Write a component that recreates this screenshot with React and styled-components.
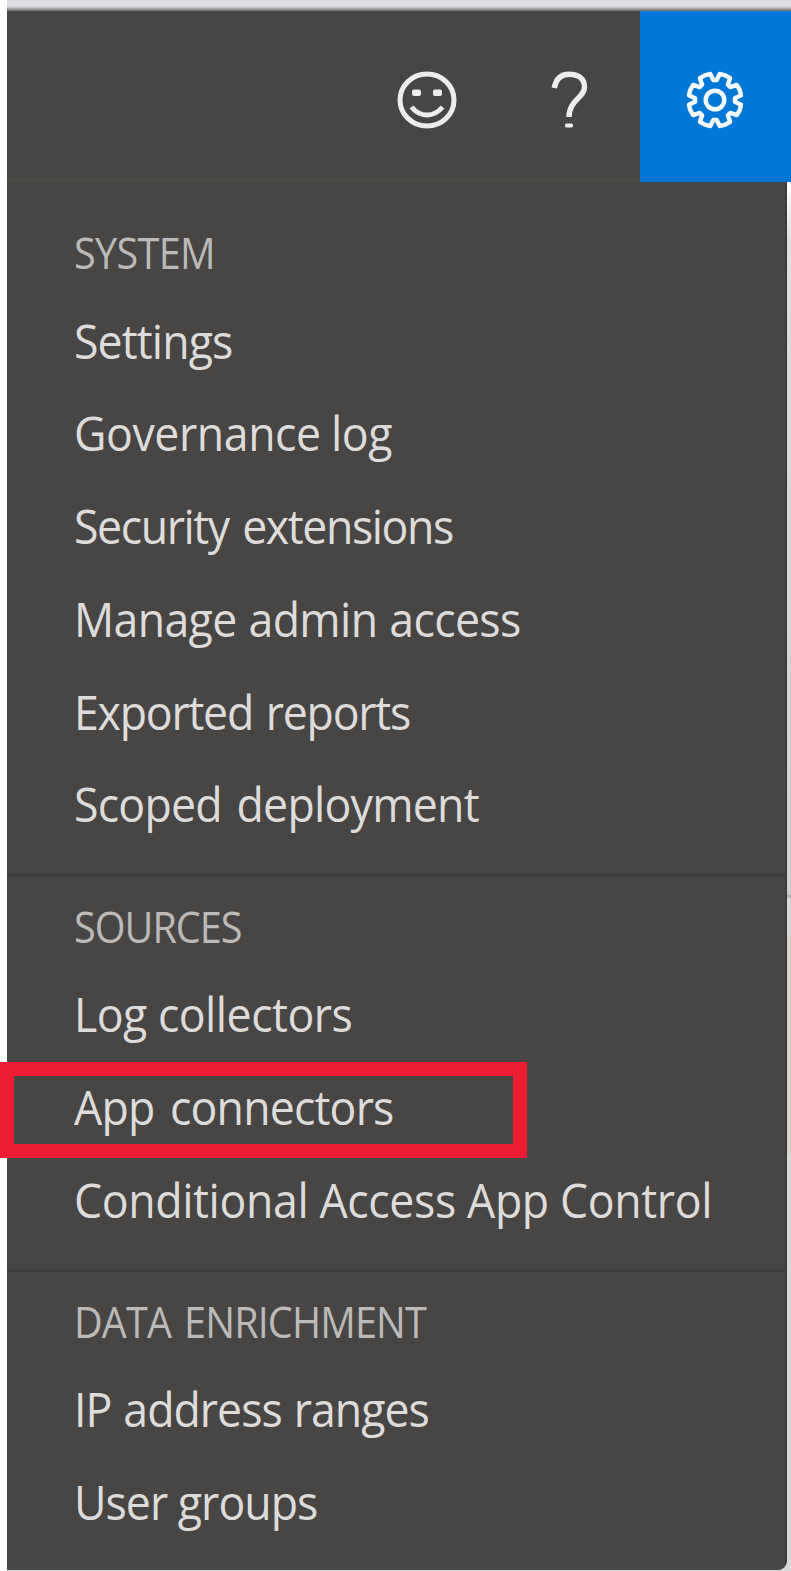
import React from 'react';
import styled, { createGlobalStyle } from 'styled-components';

const GlobalStyle = createGlobalStyle`
  * { box-sizing: border-box; }
  body { margin: 0; background: #fff; font-family: "Open Sans", "Noto Sans", sans-serif; }
`;

const Page = styled.div`
  width: 791px;
  height: 1571px;
  padding-left: 7px;
  display: flex;
  flex-direction: column;
  overflow: hidden;
`;

const BrowserEdge = styled.div`
  flex: none;
  height: 11px;
  background: linear-gradient(#dcdde2 0, #dfe0e4 6px, #b5b5b7 8px, #6b6a69 11px);
`;

const TopBar = styled.header`
  flex: none;
  height: 171px;
  display: flex;
  justify-content: flex-end;
  background: #484644;
  box-shadow: inset 0 -3px 0 #4b4a47;
`;

const BarButton = styled.button`
  width: ${(p) => p.$width}px;
  padding: 6px 0 0;
  border: 0;
  display: flex;
  align-items: center;
  justify-content: center;
  background: ${(p) => (p.$active ? '#0078d7' : 'transparent')};
  color: ${(p) => (p.$active ? '#f4f9fe' : '#ededed')};

  svg { display: block; }
`;

const Body = styled.div`
  flex: 1;
  display: flex;
  background: linear-gradient(#fff 0, #dddddf 60px, #d0d0d1 712px, #aaa 714px, #d8d8d9 717px, #d8d8d9 752px, #d6d3c9 756px, #d6d3c9 970px, #d8d8d9 974px);
`;

const Menu = styled.nav`
  width: 780px;
  height: 1388px;
  background: #484644;
  border-right: 2px solid #3d3c3a;
  border-radius: 0 0 9px 0;
`;

const Section = styled.section`
  padding: ${(p) => p.$top}px 0 ${(p) => p.$bottom}px 66.5px;
  border-bottom: ${(p) => (p.$last ? '0' : '3px solid #3f3e3c')};
`;

const Heading = styled.h2`
  margin: 0;
  height: 85.5px;
  font-size: 43px;
  font-weight: 400;
  line-height: 88px;
  letter-spacing: ${(p) => p.$track}px;
  word-spacing: ${(p) => p.$gap || 0}px;
  color: #bbbab9;
  white-space: nowrap;
  transform: scaleX(0.92);
  transform-origin: 0 50%;
`;

const Item = styled.a`
  display: block;
  position: relative;
  height: 92.8px;
  line-height: 92.8px;
  color: #dddcdb;
  text-decoration: none;
`;

const ItemText = styled.span`
  display: inline-block;
  font-size: 47px;
  letter-spacing: ${(p) => p.$track}px;
  word-spacing: ${(p) => p.$gap || 0}px;
  white-space: nowrap;
  transform: scaleX(0.95);
  transform-origin: 0 50%;
`;

const Highlight = styled.span`
  position: absolute;
  left: -73.5px;
  top: 1px;
  width: 527px;
  height: 96px;
  border: 14px solid #ef1c35;
`;

const sections = [
  {
    title: 'SYSTEM', track: -0.7, top: 27, bottom: 22.5,
    items: [
      ['Settings', -0.93],
      ['Governance log', -0.45, -1],
      ['Security extensions', -1.5, 3.5],
      ['Manage admin access', -0.68, 1],
      ['Exported reports', -1.3, 2.5],
      ['Scoped deployment', -0.8, 4],
      ],
  },
  {
    title: 'SOURCES', track: -1.05, top: 6, bottom: 22,
    items: [
      ['Log collectors', -0.55],
      ['App connectors', -0.86, 5],
      ['Conditional Access App Control', -0.4],
    ],
  },
  {
    title: 'DATA ENRICHMENT', track: -0.95, gap: 4, top: 6, bottom: 0,
    items: [
      ['IP address ranges', -1.05, 1.5],
      ['User groups', -1.03],
    ],
  },
];

const Smile = () => (
  <svg width="62" height="62" viewBox="-31 -31 62 62" fill="none" stroke="currentColor" strokeWidth="5">
    <ellipse rx="27" ry="26" />
    <path d="M-15.5 7 Q-9 15 0 15 T15.5 7" />
    <rect x="-15" y="-10.5" width="9" height="6.5" rx="2" fill="currentColor" stroke="none" />
    <rect x="6" y="-10.5" width="9" height="6.5" rx="2" fill="currentColor" stroke="none" />
  </svg>
);

const Question = () => (
  <svg width="62" height="62" viewBox="-31 -31 62 62" fill="none" stroke="currentColor" strokeWidth="5.4">
    <path d="M-14.8 -12 C-13 -21 -8 -25.7 0 -25.7 C10 -25.7 15.5 -21 15.5 -13 C15.5 -2 0 0 0 17" />
    <rect x="-4" y="23.5" width="8" height="4" rx="1.5" fill="currentColor" stroke="none" />
  </svg>
);

const teeth = 8;
const gearPath = Array.from({ length: teeth }, (_, i) => {
  const step = (Math.PI * 2) / teeth;
  const mid = -Math.PI / 2 + (i + 0.5) * step;
  return [[-0.39, 20], [-0.27, 26.5], [0, 26.7], [0.27, 26.5], [0.39, 20]]
    .map(([k, r]) => `${(Math.cos(mid + k * step) * r).toFixed(2)} ${(Math.sin(mid + k * step) * r).toFixed(2)}`)
    .join(' L');
}).join(' L');

const Gear = () => (
  <svg width="64" height="62" viewBox="-31 -31 64 62" fill="none" stroke="currentColor" strokeWidth="4.4" strokeLinejoin="round">
    <path d={`M${gearPath} Z`} />
    <circle r="9.3" />
  </svg>
);

export default function App() {
  return (
    <Page>
      <GlobalStyle />
      <BrowserEdge />
      <TopBar>
        <BarButton $width={142} aria-label="Feedback"><Smile /></BarButton>
        <BarButton $width={142} aria-label="Help"><Question /></BarButton>
        <BarButton $width={151} $active aria-label="Settings menu"><Gear /></BarButton>
      </TopBar>
      <Body>
        <Menu>
          {sections.map((s, i) => (
            <Section key={s.title} $top={s.top} $bottom={s.bottom} $last={i === sections.length - 1}>
              <Heading $track={s.track} $gap={s.gap}>{s.title}</Heading>
              {s.items.map(([label, track, gap]) => (
                <Item key={label}>
                  {label === 'App connectors' && <Highlight />}
                  <ItemText $track={track} $gap={gap}>{label}</ItemText>
                </Item>
              ))}
            </Section>
          ))}
        </Menu>
      </Body>
    </Page>
  );
}
